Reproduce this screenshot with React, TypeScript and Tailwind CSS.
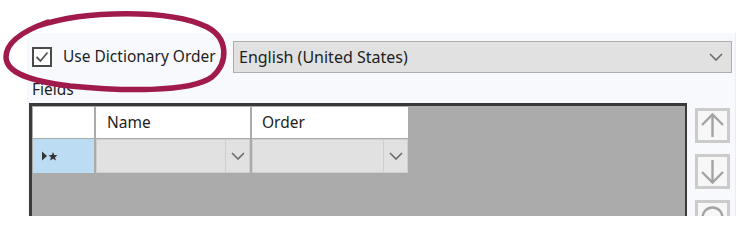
import React from 'react';

const font = { fontFamily: '"Noto Sans", "Open Sans", Arial, sans-serif' };

const Chevron = ({ className = '' }: { className?: string }) => (
  <svg width="14" height="8" viewBox="0 0 14 8" className={className}>
    <path d="M1 1 L7 7 L13 1" fill="none" stroke="#6b6b6b" strokeWidth="1.6" />
  </svg>
);

const ComboCell = ({ width }: { width: string }) => (
  <div className={`flex h-[34px] ${width} border border-[#cfcfcf] bg-[#e1e1e1]`}>
    <div className="flex-1" />
    <div className="flex w-[24px] items-center justify-center border-l border-[#cfcfcf]">
      <Chevron />
    </div>
  </div>
);

const ArrowButton = ({ dir }: { dir: 'up' | 'down' | 'circle' }) => (
  <div className="flex h-[35px] w-[35px] items-center justify-center border-[3px] border-[#cbcbcb] bg-[#f7f7f7]">
    <svg width="27" height="27" viewBox="0 0 27 27">
      {dir === 'up' && (
        <g fill="none" stroke="#a3a3a3" strokeWidth="2.4">
          <path d="M13.5 25 L13.5 3" />
          <path d="M3 13 L13.5 2.5 L24 13" />
        </g>
      )}
      {dir === 'down' && (
        <g fill="none" stroke="#a3a3a3" strokeWidth="2.4">
          <path d="M13.5 2 L13.5 24" />
          <path d="M3 14 L13.5 24.5 L24 14" />
        </g>
      )}
      {dir === 'circle' && <circle cx="13.5" cy="13.5" r="10" fill="none" stroke="#a3a3a3" strokeWidth="2.4" />}
    </svg>
  </div>
);

export default function App() {
  return (
    <div className="relative h-[243px] w-[748px] overflow-hidden bg-white text-[#1e1e1e]" style={font}>
      <div className="ml-[27px] mt-[33px] h-[183px] w-[709px] overflow-hidden border-r border-[#e8eef8] bg-[#f7f9fc]">
        {/* top row */}
        <div className="flex items-center pl-[5px] pt-[8px]">
          <div className="flex h-[20px] w-[20px] items-center justify-center border-2 border-[#4a4a4a] bg-white">
            <svg width="14" height="12" viewBox="0 0 14 12">
              <path d="M1.5 6 L5.5 10 L12.5 1.5" fill="none" stroke="#555" strokeWidth="1.8" />
            </svg>
          </div>
          <span className="ml-[11px] text-[15.5px] leading-none">Use Dictionary Order</span>
          <div className="ml-auto mr-[3px] flex h-[32px] w-[499px] items-center border border-[#adadad] bg-[#e1e1e1] pl-[5px] pr-[8px]">
            <span className="flex-1 text-[16px]">English (United States)</span>
            <Chevron />
          </div>
        </div>

        {/* Fields label */}
        <div className="mt-[8px] pl-[5px] text-[15.5px] leading-[16px]">Fields</div>

        <div className="mt-[6px] flex items-start">
          {/* grid */}
          <div className="ml-[2px] h-[120px] w-[658px] border-[3px] border-r-2 border-[#3a3a3a] bg-[#ababab] p-[1px]">
            <div className="flex gap-[2px]">
              <div className="h-[31px] w-[61px] bg-white" />
              <div className="flex h-[31px] w-[154px] items-center bg-white pl-[11px] text-[15.5px]">Name</div>
              <div className="flex h-[31px] w-[156px] items-center bg-white pl-[10px] text-[15.5px]">Order</div>
            </div>
            <div className="mt-[1px] flex gap-[2px]">
              <div className="flex h-[34px] w-[61px] items-center bg-[#bcdcf4] pl-[8px]">
                <svg width="18" height="10" viewBox="0 0 18 10">
                  <path d="M1 0.5 L6 5 L1 9.5 Z" fill="#333" />
                  <path d="M12 1 L13.2 4 L16.5 4.2 L14 6.3 L14.9 9.5 L12 7.7 L9.1 9.5 L10 6.3 L7.5 4.2 L10.8 4 Z" fill="#333" />
                </svg>
              </div>
              <ComboCell width="w-[154px]" />
              <ComboCell width="w-[156px]" />
            </div>
          </div>

          {/* side buttons */}
          <div className="ml-[8px] mt-[5px] flex flex-col gap-[11px]">
            <ArrowButton dir="up" />
            <ArrowButton dir="down" />
            <ArrowButton dir="circle" />
          </div>
        </div>
      </div>

      {/* hand-drawn annotation */}
      <svg className="pointer-events-none absolute left-0 top-0" width="748" height="243" viewBox="0 0 748 243">
        <path
          d="M38 26 C85 10 170 9 207 27 C228 38 229 62 212 77 C190 93 120 91 70 86 C30 81 6 73 6 57 C6 43 20 32 48 22"
          fill="none"
          stroke="#a01a4b"
          strokeWidth="5.5"
          strokeLinecap="round"
        />
      </svg>
    </div>
  );
}
